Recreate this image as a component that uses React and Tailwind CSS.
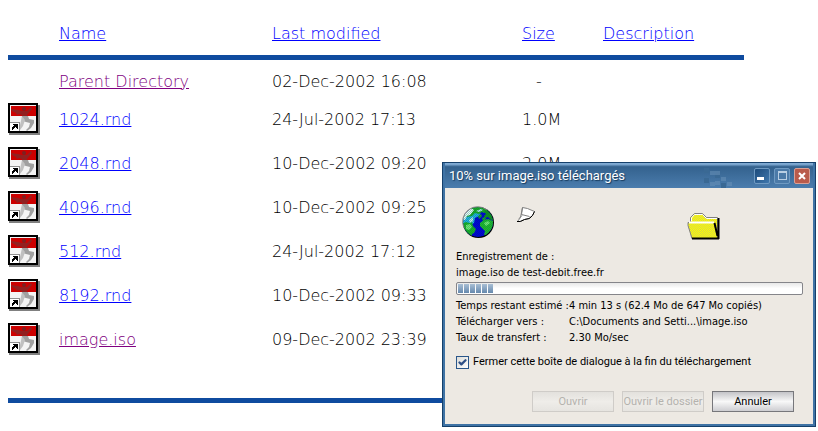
import React from 'react';
import { Check } from 'lucide-react';

const files = [
  { name: '1024.rnd', modified: '24-Jul-2002 17:13', size: '1.0M' },
  { name: '2048.rnd', modified: '10-Dec-2002 09:20', size: '2.0M' },
  { name: '4096.rnd', modified: '10-Dec-2002 09:25' },
  { name: '512.rnd', modified: '24-Jul-2002 17:12' },
  { name: '8192.rnd', modified: '10-Dec-2002 09:33' },
  { name: 'image.iso', modified: '09-Dec-2002 23:39', visited: true },
];

const details = [
  { label: 'Temps restant estimé :', value: '4 min 13 s (62.4 Mo de 647 Mo copiés)' },
  { label: 'Télécharger vers :', value: 'C:\\Documents and Setti...\\image.iso' },
  { label: 'Taux de transfert :', value: '2.30 Mo/sec' },
];

const FileIcon = () => (
  <svg width="32" height="32" viewBox="0 0 32 32" className="block" aria-hidden="true">
    <path d="M1 2h31v30H1z" fill="#808080" />
    <rect width="30" height="30" fill="#000" />
    <rect x="2" y="2" width="26" height="26" fill="#f4f4f4" />
    <rect x="3" y="3" width="25" height="10" fill="#cc0000" />
    {/* Runner: arms and torso over the red, legs over the white */}
    <circle cx="16" cy="6" r="2" fill="#7d2020" />
    <path d="M3 6l7 1 4 1h5l4-4 1 2-5 6v3h-5v-3l-3-1-2 1-1-2-4-2z" fill="#922020" />
    <path d="M14 13h6l1 3 5 1v3l-3 5-4 3-1-1 3-3 1-4-4-1-3-1z" fill="#a0a0a0" />
    <path d="M14 13l3 4-2 6-3 4h-1l1-5z" fill="#c0c0c0" />
    {/* Shortcut arrow */}
    <rect x="2" y="19" width="10" height="9" fill="#909090" />
    <rect x="2" y="20" width="9" height="8" fill="#fff" />
    <path d="M5 21h5v5H9v-1H8v-1H7v1H6v1H5v1H4v-3h1v-1h1v-1H5z" fill="#000" />
  </svg>
);

const GlobeIcon = () => (
  <svg width="34" height="34" viewBox="0 0 34 34" aria-hidden="true">
    <defs>
      <clipPath id="globe">
        <circle cx="16" cy="16" r="15" />
      </clipPath>
      <pattern id="dots" width="2" height="2" patternUnits="userSpaceOnUse">
        <path d="M0 0h1v1H0zM1 1h1v1H1z" fill="#004060" opacity="0.3" />
      </pattern>
    </defs>
    <circle cx="16.500" cy="16.500" r="15.500" fill="#000" />
    <g clipPath="url(#globe)">
      <rect width="34" height="34" fill="#0000d8" />
      <path d="M0 8h8l5-4 6 2-2 4-4 2-1 5-4 2-8-2z" fill="#20b8e0" />
      <path d="M9 0h14l3 5-4 2-2-1-3 2-4-1-3 3-6 1z" fill="#18b020" />
      <path d="M3 7l6-5 3 2-4 5-3 1-2 4-3-1z" fill="#e4fff0" />
      <path d="M0 18l4-2 3 1 3-1 1 4 3 3-2 4-2 1v5L0 24z" fill="#18b820" />
      <path d="M24 3l6 5 2 7-3-1-3-3-3 1-1-2 2-2-2-2z" fill="#109818" />
      <path d="M20 12l3-1 1 2-3 2zM16 10l3-2 1 2-3 3z" fill="#18a820" />
      <path d="M18 17l4-3 4-1 5 2v7l-3 3-3 5-3-1 1-4-3-3-2-2z" fill="#20c028" />
      <path d="M4 19l4-1 2 3-3 3-3-1zM22 17l4-2 2 2-4 3z" fill="#70f070" />
      <path d="M7 14l4-3v4l-3 2zM14 5l5-2 2 1-4 2z" fill="#b0f0e8" />
      <rect width="34" height="34" fill="url(#dots)" />
    </g>
    <path d="M2 22A15 15 0 0 1 25 4" fill="none" stroke="#808080" />
  </svg>
);

const FlyingPage = () => (
  <svg width="20" height="18" viewBox="0 0 20 18" aria-hidden="true">
    <path d="M6.500 1.500l5 1 7 3-2 4-4 3-4 1-5 2H1.500l3-4z" fill="#fff" stroke="#808080" />
    <path d="M6.500 1.500l-1 7 8 2M3 12.500l3-3" fill="none" stroke="#808080" />
    <path d="M18.500 5.500l-2 4-3 3-5 1-4 2H1" fill="none" stroke="#000" />
  </svg>
);

const FolderIcon = () => (
  <svg width="34" height="28" viewBox="0 0 34 28" aria-hidden="true">
    <defs>
      <pattern id="yellow" width="2" height="2" patternUnits="userSpaceOnUse">
        <rect width="2" height="2" fill="#ffff00" />
        <path d="M0 0h1v1H0zM1 1h1v1H1z" fill="#d4d44c" />
      </pattern>
    </defs>
    <path d="M3.500 10V5.500l4-4h8l4 4h11V26h-26z" fill="url(#yellow)" stroke="#808080" />
    <path d="M4.500 9V6l3-3.500h8l4 4h11" fill="none" stroke="#fff" />
    <path d="M1 10.500h26l4 16H5l-4-13z" fill="url(#yellow)" stroke="#808080" />
    <path d="M2 10.500h25" stroke="#fff" strokeWidth="2" />
    <path d="M31.500 6v21M27.500 11l3 13" fill="none" stroke="#000" strokeWidth="2" />
    <path d="M5 26.500h27" stroke="#000" strokeWidth="2" />
  </svg>
);

const TitlePixels = () => (
  <svg width="30" height="24" viewBox="0 0 30 24" aria-hidden="true" shapeRendering="crispEdges">
    <path d="M0 4h5v5H0zM11 9h5v5h-5zM0 14h5v5H0zM17 19h5v5h-5z" fill="#3a6994" />
    <path d="M6 7h5v4H6zM11 7h5v4h-5zM6 18h5v4H6zM17 13h5v4h-5zM11 17h5v4h-5zM23 18h5v4h-5z" fill="#6b93b9" opacity="0.5" />
  </svg>
);

const Rule = () => (
  <tr>
    <td colSpan={5} className="p-0">
      <hr className="h-[5px] border-0 bg-[#0f4b9f]" />
    </td>
  </tr>
);

const WindowButton = ({ label, className, children }) => (
  <button
    type="button"
    aria-label={label}
    className={`flex h-4 w-4 items-center justify-center rounded-xs border ${className}`}
  >
    {children}
  </button>
);

const DialogButton = ({ disabled, children }) => (
  <button
    type="button"
    disabled={disabled}
    className={`h-[21px] w-[82px] whitespace-nowrap border font-[Roboto] text-[11px] leading-4 ${
      disabled
        ? 'border-[#cfccc8] bg-linear-to-b from-[#e3e1dd] via-[#efede9] to-[#e6e4e0] text-[#b4b2ae]'
        : 'border-[#77777b] bg-linear-to-b from-[#c4c4c8] via-[#f8f8f8] to-[#cdcdd1] text-black'
    }`}
  >
    {children}
  </button>
);

const DirectoryListing = () => {
  const link = 'text-[#0000ff] underline';
  const visited = 'text-[#800080] underline';

  return (
    <table className="mx-2 w-[90%] table-fixed border-collapse text-left text-[16px] leading-5">
      <colgroup>
        <col className="w-[51px]" />
        <col className="w-[213px]" />
        <col className="w-[250px]" />
        <col className="w-[81px]" />
        <col />
      </colgroup>
      <thead>
        <tr className="h-[55px]">
          <td />
          <th className="p-0 pt-3 font-extralight"><a href="#name" className={link}>Name</a></th>
          <th className="p-0 pt-3 font-extralight"><a href="#modified" className={link}>Last modified</a></th>
          <th className="p-0 pt-3 font-extralight"><a href="#size" className={link}>Size</a></th>
          <th className="p-0 pt-3 font-extralight"><a href="#description" className={link}>Description</a></th>
        </tr>
        <Rule />
      </thead>
      <tbody>
        <tr className="h-[37px]">
          <td />
          <td className="p-0 pt-1.5"><a href="#parent" className={visited}>Parent Directory</a></td>
          <td className="p-0 pt-1.5">02-Dec-2002 16:08</td>
          <td className="p-0 pt-1.5 pl-3.5">-</td>
          <td />
        </tr>
        {files.map((file) => (
          <tr key={file.name} className="h-11">
            <td className="p-0"><FileIcon /></td>
            <td className="p-0 pt-0.5">
              <a href={`#${file.name}`} className={file.visited ? visited : link}>{file.name}</a>
            </td>
            <td className="p-0 pt-0.5">{file.modified}</td>
            <td className="p-0 pt-0.5">{file.size}</td>
            <td />
          </tr>
        ))}
        <tr className="h-[37px]">
          <td colSpan={5} />
        </tr>
        <Rule />
      </tbody>
    </table>
  );
};

const DownloadDialog = () => (
  <section
    role="dialog"
    aria-labelledby="dialog-title"
    className="absolute top-[162px] left-[442px] w-[374px] border border-[#15406b] bg-[#3f73a5] px-0.5 pb-0.5 font-['DejaVu_Sans_Condensed','DejaVu_Sans',sans-serif] text-[11px] font-normal leading-4 text-black"
  >
    <header className="flex h-[25px] items-center bg-linear-to-b from-[#80abd4] from-5% via-[#34628e] via-15% to-[#4b7dae] pr-[3px] pl-1">
      <h1
        id="dialog-title"
        className="flex-1 font-[Roboto] text-[13px] leading-4 text-white text-shadow-[1px_1px_1px_#173a5c]"
      >
        10% sur image.iso téléchargés
      </h1>
      <TitlePixels />
      <div className="ml-5 flex gap-1">
        <WindowButton label="Réduire" className="border-[#6f9ac2] bg-linear-to-br from-[#1d4c7c] to-[#3f77ad]">
          <span className="mt-1.5 mr-1 h-[3px] w-[7px] bg-white" />
        </WindowButton>
        <WindowButton label="Agrandir" className="border-[#6f9ac2] bg-[#4b7aa8]">
          <span className="h-[9px] w-[9px] border border-t-2 border-[#b9cfe4]" />
        </WindowButton>
        <WindowButton label="Fermer" className="border-[#d9a096] bg-[#b95b4b]">
          <svg width="8" height="8" viewBox="0 0 8 8" aria-hidden="true">
            <path d="M1 1l6 6M7 1L1 7" stroke="#fff" strokeWidth="2" />
          </svg>
        </WindowButton>
      </div>
    </header>

    <div className="bg-[#ede9e3] pr-2.5 pb-3 pl-[11px]">
      <div className="flex h-[61px] items-start pt-[18px] pl-1.5">
        <GlobeIcon />
        <div className="ml-5"><FlyingPage /></div>
        <div className="ml-auto pt-1.5 pr-[82px]"><FolderIcon /></div>
      </div>

      <p>Enregistrement de :</p>
      <p>image.iso de test-debit.free.fr</p>
      <div
        role="progressbar"
        aria-label="Téléchargement"
        aria-valuenow={10}
        className="mt-px flex h-[13px] gap-px rounded-xs border border-[#85858a] bg-linear-to-b from-[#e8e8e8] to-white to-50% p-px"
      >
        {[1, 2, 3, 4, 5, 6].map((block) => (
          <span key={block} className="w-[5px] bg-linear-to-b from-[#a9bfd5] to-[#6689ad]" />
        ))}
      </div>

      <dl className="mt-[3px] grid grid-cols-[113px_1fr] whitespace-nowrap">
        {details.map((detail) => (
          <React.Fragment key={detail.label}>
            <dt>{detail.label}</dt>
            <dd>{detail.value}</dd>
          </React.Fragment>
        ))}
      </dl>

      <label className="mt-2 flex items-center gap-1 whitespace-nowrap font-[Roboto]">
        <span className="grid h-[13px] w-[13px]">
          <input
            type="checkbox"
            defaultChecked
            className="peer col-start-1 row-start-1 h-[13px] w-[13px] appearance-none border border-[#2a568a] bg-linear-to-br from-[#dcdcd8] to-white"
          />
          <Check className="pointer-events-none invisible col-start-1 row-start-1 h-[13px] w-[13px] p-0.5 text-[#2e4f86] peer-checked:visible" strokeWidth={6} />
        </span>
        Fermer cette boîte de dialogue à la fin du téléchargement
      </label>

      <div className="mt-[21px] flex justify-end gap-2 pr-[9px]">
        <DialogButton disabled>Ouvrir</DialogButton>
        <DialogButton disabled>Ouvrir le dossier</DialogButton>
        <DialogButton>Annuler</DialogButton>
      </div>
    </div>
  </section>
);

const App = () => {
  return (
    <main className="relative min-h-screen bg-white font-['DejaVu_Sans',sans-serif] font-extralight text-black">
      <DirectoryListing />
      <DownloadDialog />
    </main>
  );
};

export default App;
